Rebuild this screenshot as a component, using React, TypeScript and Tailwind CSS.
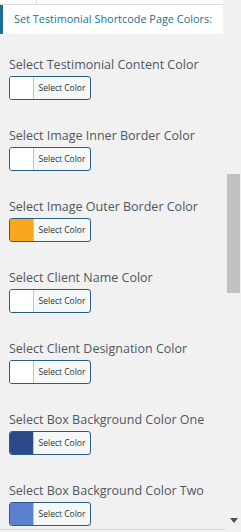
const fields = [
  { label: 'Select Testimonial Content Color', color: '#ffffff' },
  { label: 'Select Image Inner Border Color', color: '#ffffff' },
  { label: 'Select Image Outer Border Color', color: '#f9a81c' },
  { label: 'Select Client Name Color', color: '#ffffff' },
  { label: 'Select Client Designation Color', color: '#ffffff' },
  { label: 'Select Box Background Color One', color: '#2c4a8a' },
  { label: 'Select Box Background Color Two', color: '#5b80d0' },
];

function ColorButton({ color }: { color: string }) {
  return (
    <div className="mt-[4px] flex h-[24px] w-[82px] overflow-hidden rounded-[3px] border border-[#2a5d84] bg-[#f6f7f7]">
      <span className="w-[24px] border-r border-[#c3c4c7]" style={{ backgroundColor: color }} />
      <span className="flex flex-1 items-center justify-center text-[8.5px] text-[#2c3338]">Select Color</span>
    </div>
  );
}

export default function App() {
  return (
    <div
      className="flex h-[532px] w-[241px] overflow-hidden bg-[#f1f1f1]"
      style={{ fontFamily: '"Open Sans", "Noto Sans", sans-serif' }}
    >
      <div className="flex w-[226px] flex-col">
        <div className="flex h-[5px] w-[223px] border-b border-[#dcdcde] bg-white">
          <span className="ml-[36px] w-px bg-[#dcdcde]" />
        </div>
        <div className="flex h-[29px] w-[223px] items-center whitespace-nowrap border-l-[3px] border-[#1e6d94] bg-white pb-px pl-[11px] text-[10.9px] text-[#23708f]">
          Set Testimonial Shortcode Page Colors:
        </div>
        <div className="flex flex-col gap-[28px] pl-[9px] pt-[23px]">
          {fields.map((f) => (
            <div key={f.label} className="flex flex-col">
              <div className="h-[15px] whitespace-nowrap text-[12.5px] leading-[15px] text-[#50575e]">{f.label}</div>
              <ColorButton color={f.color} />
            </div>
          ))}
        </div>
        <div className="mt-auto mb-[2px] h-px bg-[#dcdcde]" />
      </div>
      <div className="flex w-[15px] flex-col items-center">
        <div className="mt-[174px] h-[119px] w-[13px] bg-[#c1c1c1]" />
        <svg className="mt-auto mb-[9px]" width="8" height="5" viewBox="0 0 8 5">
          <path d="M0 0 L8 0 L4 5 Z" fill="#505050" />
        </svg>
      </div>
    </div>
  );
}
